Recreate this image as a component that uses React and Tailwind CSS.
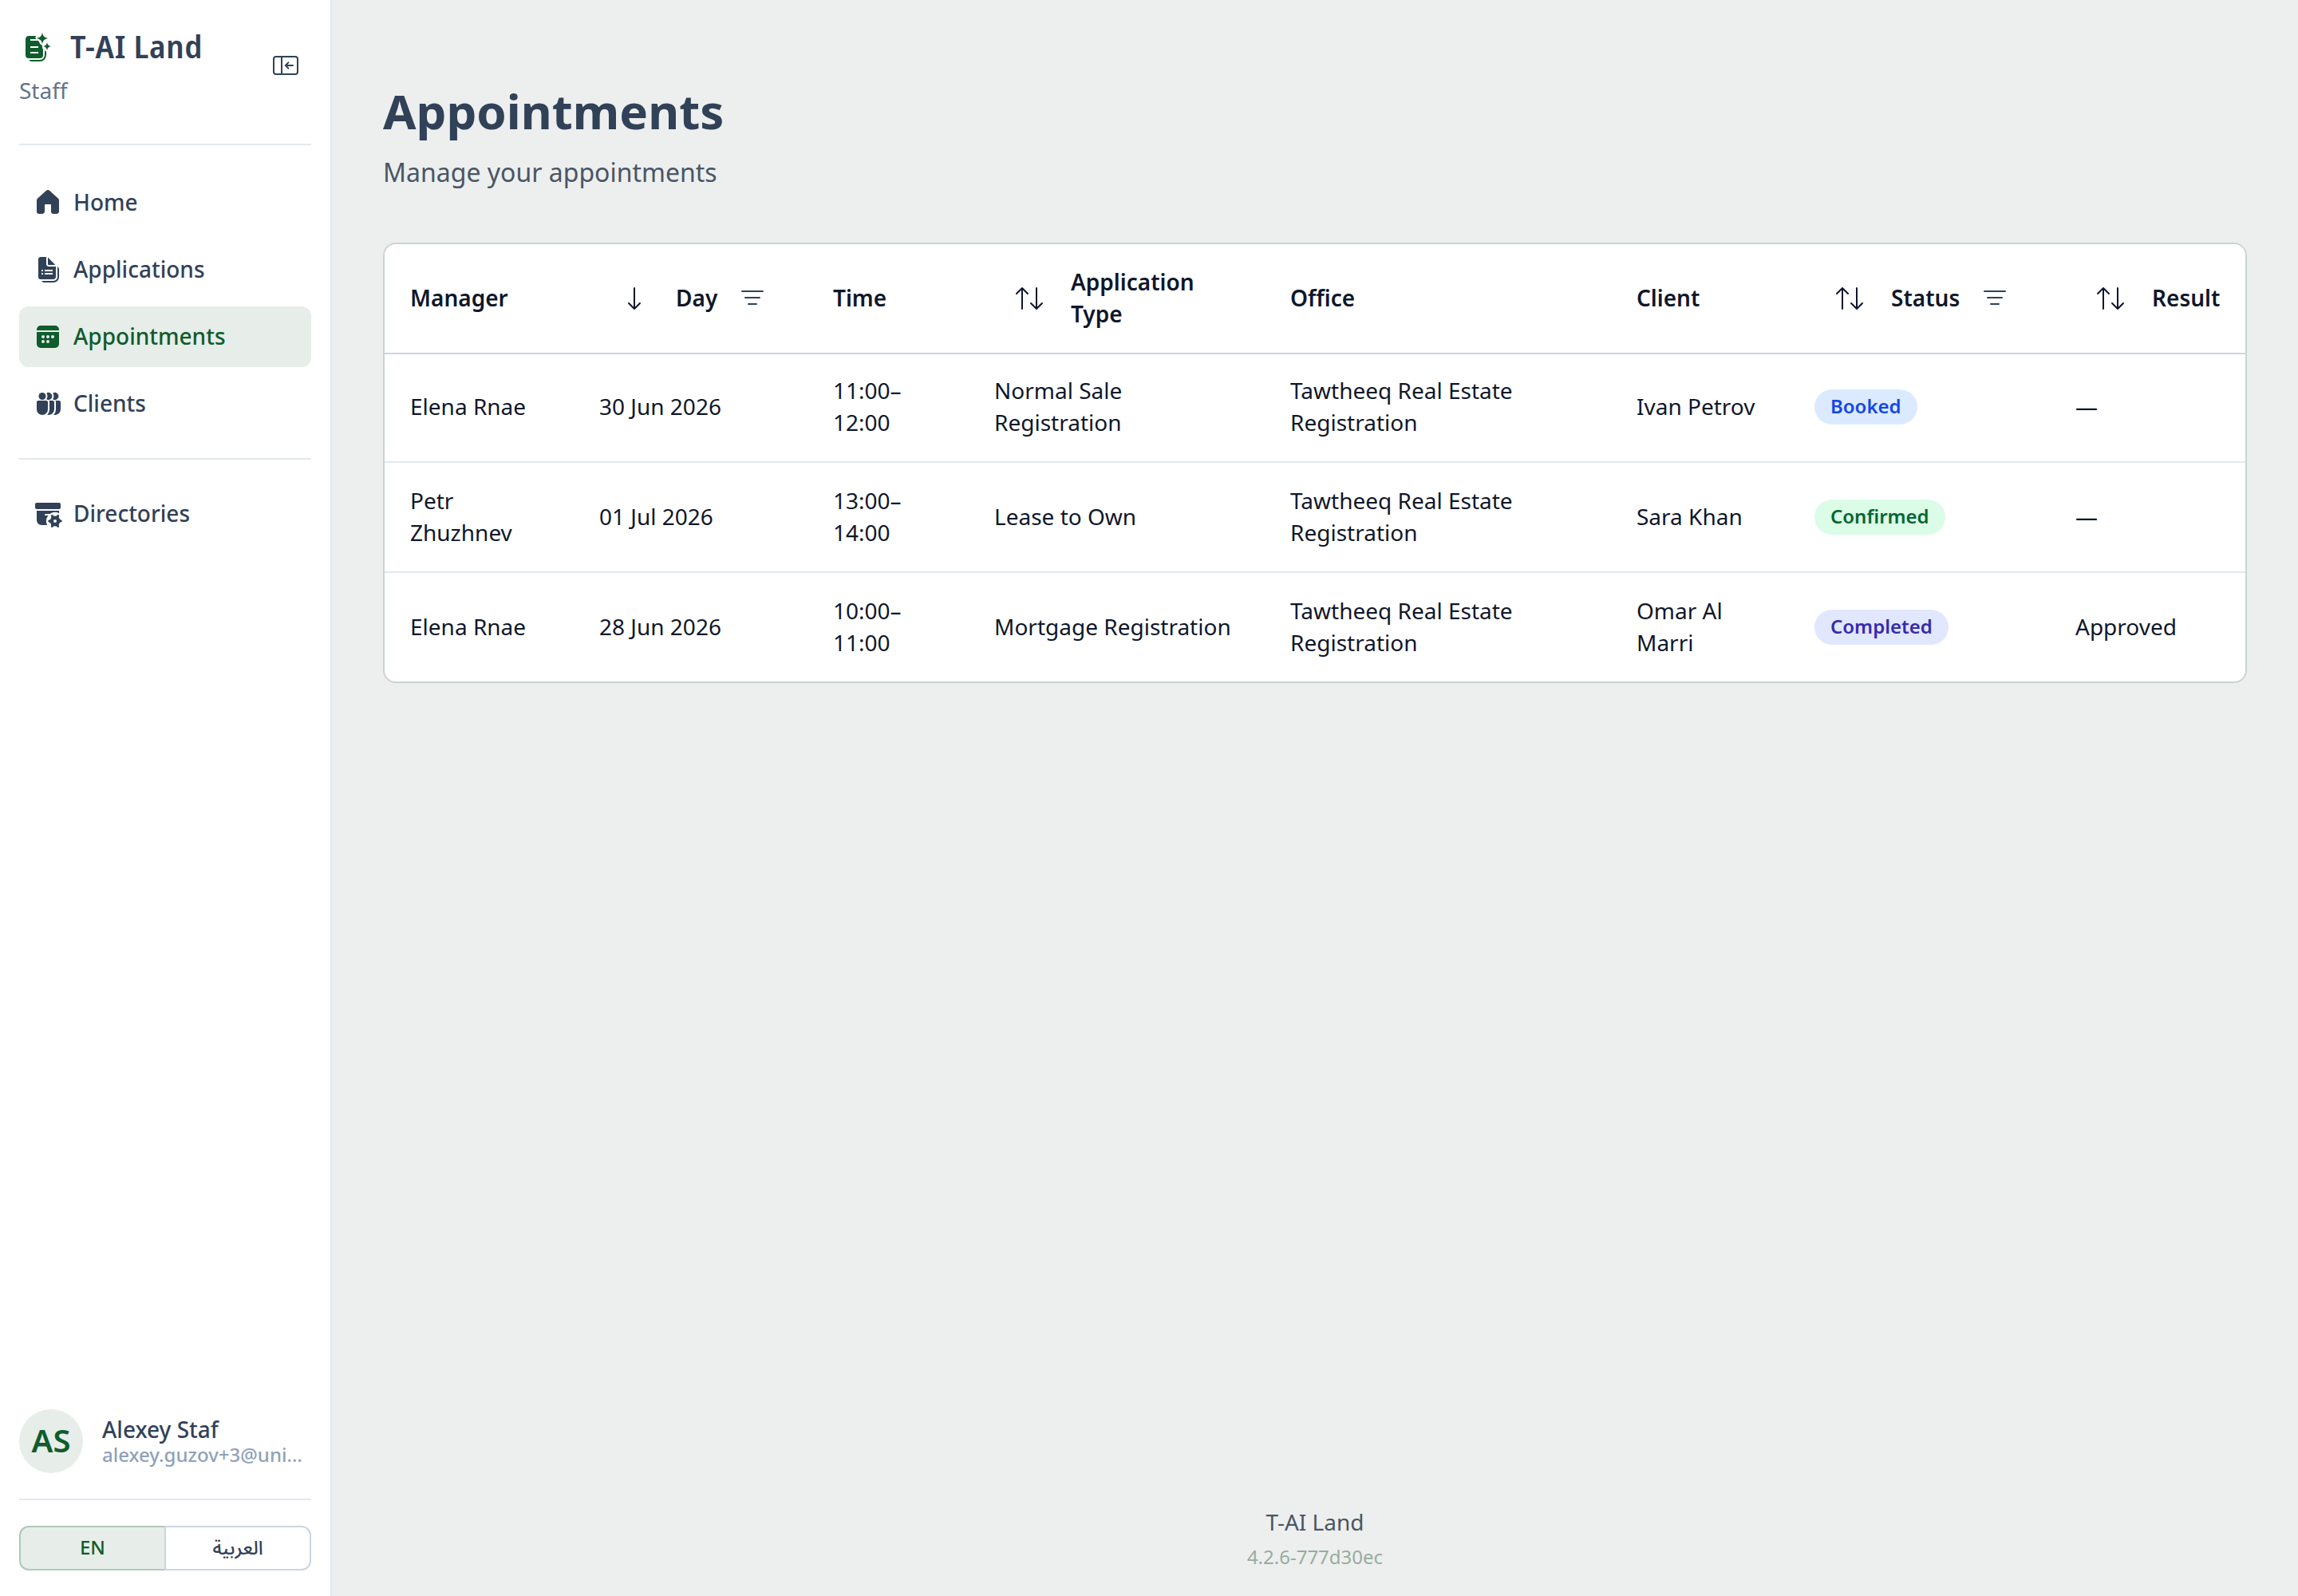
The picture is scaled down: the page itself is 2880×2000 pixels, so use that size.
/* Appointments page: staff sidebar, appointments table and footer. */

const STATUS_STYLES = {
  Booked: "bg-blue-100 text-blue-700",
  Confirmed: "bg-green-100 text-green-800",
  Completed: "bg-indigo-100 text-indigo-800",
};

const COLUMNS = [
  { label: "Manager", width: "w-[237px]" },
  { label: "Day", width: "w-[293px]", sort: "desc", filter: true },
  { label: "Time", width: "w-[202px]" },
  { label: "Application Type", width: "w-[371px]", sort: "none" },
  { label: "Office", width: "w-[434px]" },
  { label: "Client", width: "w-[223px]" },
  { label: "Status", width: "w-[327px]", sort: "none", filter: true },
  { label: "Result", width: "w-[245px]", sort: "none" },
];

const ROWS = [
  {
    height: "h-[136px] pb-0.5",
    manager: "Elena Rnae",
    day: "30 Jun 2026",
    time: ["11:00–", "12:00"],
    type: "Normal Sale Registration",
    typeWidth: "w-[240px]",
    office: "Tawtheeq Real Estate Registration",
    client: "Ivan Petrov",
    status: "Booked",
    result: "—",
  },
  {
    height: "h-[138px]",
    manager: "Petr Zhuzhnev",
    day: "01 Jul 2026",
    time: ["13:00–", "14:00"],
    type: "Lease to Own",
    office: "Tawtheeq Real Estate Registration",
    client: "Sara Khan",
    status: "Confirmed",
    result: "—",
  },
  {
    height: "h-[136px]",
    manager: "Elena Rnae",
    day: "28 Jun 2026",
    time: ["10:00–", "11:00"],
    type: "Mortgage Registration",
    office: "Tawtheeq Real Estate Registration",
    client: "Omar Al Marri",
    status: "Completed",
    result: "Approved",
  },
];

function Icon({ children }) {
  return (
    <svg viewBox="0 0 20 20" className="size-10 shrink-0" fill="currentColor">
      {children}
    </svg>
  );
}

function LogoIcon() {
  return (
    <Icon>
      <path d="M6 3h4.6a1.2 1.2 0 0 0 .3 2H7v1h5.1l.9 1.8c.3.6.8 1 1.4 1l.1 1.8.5.8V15a2 2 0 0 1-2 2H6a2 2 0 0 1-2-2V5c0-1.1.9-2 2-2Zm1 6.5v1h5v-1H7ZM7 13v1h5v-1H7Z" />
      <path d="M16 12.2l1 .6V15a4 4 0 0 1-4 4H7.7a2 2 0 0 1-1.6-1H13a3 3 0 0 0 3-3v-2.8Z" />
      <path d="M14.5 1c.5 2.2 1.3 3 3.5 3.5-2.2.5-3 1.3-3.5 3.5-.5-2.2-1.3-3-3.5-3.5C13.2 4 14 3.2 14.5 1Z" />
      <path d="M17.5 7.1c.4 1.5.9 2 2.4 2.4-1.5.4-2 .9-2.4 2.4-.4-1.5-.9-2-2.4-2.4 1.5-.4 2-.9 2.4-2.4Z" />
    </Icon>
  );
}

function CollapseIcon() {
  return (
    <Icon>
      <g fill="none" stroke="currentColor" strokeLinecap="round" strokeLinejoin="round">
        <rect x="2.5" y="4.5" width="15" height="11" rx="1.5" />
        <path d="M7.5 4.5v11" />
        <path d="M14.5 10H9.9M11.7 8.2 9.9 10l1.8 1.8" />
      </g>
    </Icon>
  );
}

function HomeIcon() {
  return (
    <Icon>
      <path d="M9 2.39a1.5 1.5 0 0 1 2 0l5.5 4.94c.32.28.5.69.5 1.12v7.05c0 .83-.67 1.5-1.5 1.5H13.5a1.5 1.5 0 0 1-1.5-1.5V11.5a.5.5 0 0 0-.5-.5h-3a.5.5 0 0 0-.5.5v4c0 .83-.67 1.5-1.5 1.5h-2A1.5 1.5 0 0 1 3 15.5V8.45c0-.43.18-.84.5-1.12L9 2.39Z" />
    </Icon>
  );
}

function ApplicationsIcon() {
  return (
    <Icon>
      <path
        fillRule="evenodd"
        d="M9 2v4.5C9 7.33 9.67 8 10.5 8H15v6.5c0 .83-.67 1.5-1.5 1.5h-8A1.5 1.5 0 0 1 4 14.5v-11C4 2.67 4.67 2 5.5 2H9ZM6 10v1h1v-1H6Zm2 0v1h5v-1H8Zm-2 2v1h1v-1H6Zm2 0v1h5v-1H8Z"
      />
      <path d="M10 2.3v4.2c0 .28.22.5.5.5h4.2L10 2.3Z" />
      <path d="M6 17c.37.6 1 1 1.75 1h5.75a3.5 3.5 0 0 0 3.5-3.5V9.73A2 2 0 0 0 16 8v6.5a2.5 2.5 0 0 1-2.5 2.5H6Z" />
    </Icon>
  );
}

function CalendarIcon() {
  return (
    <Icon>
      <path d="M14.5 3A2.5 2.5 0 0 1 17 5.5V6H3v-.5A2.5 2.5 0 0 1 5.5 3h9Z" />
      <path
        fillRule="evenodd"
        d="M17 7v7.5a2.5 2.5 0 0 1-2.5 2.5h-9A2.5 2.5 0 0 1 3 14.5V7h14ZM7 11a1 1 0 1 0 0-2 1 1 0 0 0 0 2Zm0 3a1 1 0 1 0 0-2 1 1 0 0 0 0 2Zm3-3a1 1 0 1 0 0-2 1 1 0 0 0 0 2Zm0 3a1 1 0 1 0 0-2 1 1 0 0 0 0 2Zm3-3a1 1 0 1 0 0-2 1 1 0 0 0 0 2Z"
      />
    </Icon>
  );
}

function ClientsIcon() {
  return (
    <Icon>
      <circle cx="6.5" cy="5.25" r="2.25" />
      <path d="M4 8h5a1 1 0 0 1 1 1v4.5a3.5 3.5 0 1 1-7 0V9a1 1 0 0 1 1-1Z" />
      <path d="M9.1 7.1a3.24 3.24 0 0 0 0-3.7 2.25 2.25 0 1 1 0 3.7Z" />
      <path d="M10.73 8H13a1 1 0 0 1 1 1v4.5a3.5 3.5 0 0 1-4.4 3.38A4.48 4.48 0 0 0 11 13.5V9c0-.36-.1-.7-.27-1Z" />
      <path d="M13.1 7.1a3.24 3.24 0 0 0 0-3.7 2.25 2.25 0 1 1 0 3.7Z" />
      <path d="M14.73 8H17a1 1 0 0 1 1 1v4.5a3.5 3.5 0 0 1-4.4 3.38A4.48 4.48 0 0 0 15 13.5V9c0-.36-.1-.7-.27-1Z" />
    </Icon>
  );
}

function DirectoriesIcon() {
  return (
    <Icon>
      <path d="M3 3a1 1 0 0 0-1 1v2a1 1 0 0 0 1 1h14a1 1 0 0 0 1-1V4a1 1 0 0 0-1-1H3Z" />
      <path d="M3 8h14v1.6a5.5 5.5 0 0 0-5.73.4H8.5a.5.5 0 0 0 0 1h1.76A5.5 5.5 0 0 0 9.6 17H6a3 3 0 0 1-3-3V8Z" />
      <path
        fillRule="evenodd"
        d="M12.07 11.44a2 2 0 0 1-1.43 2.48l-.46.12a4.73 4.73 0 0 0 .01 1.01l.35.08a2 2 0 0 1 1.45 2.52l-.13.42c.26.2.53.38.83.52l.32-.34a2 2 0 0 1 2.91 0l.33.34c.3-.14.57-.31.83-.51l-.16-.55a2 2 0 0 1 1.43-2.48l.47-.12a4.73 4.73 0 0 0-.02-1.01l-.35-.08a2 2 0 0 1-1.45-2.51l.13-.42a4.3 4.3 0 0 0-.83-.53l-.32.34a2 2 0 0 1-2.91 0l-.33-.34c-.3.14-.57.31-.83.5l.16.56ZM14.5 15.5a1 1 0 1 1 0-2 1 1 0 0 1 0 2Z"
      />
    </Icon>
  );
}

function SortIcon({ direction }) {
  return (
    <Icon>
      <g fill="none" stroke="currentColor" strokeLinecap="round" strokeLinejoin="round">
        {direction === "desc" ? (
          <path d="M10 3.5v13M6.5 13l3.5 3.5 3.5-3.5" />
        ) : (
          <path d="M5.5 16.5v-13M2 7l3.5-3.5L9 7M14.5 3.5v13M11 13l3.5 3.5L18 13" />
        )}
      </g>
    </Icon>
  );
}

function FilterIcon() {
  return (
    <Icon>
      <path
        d="M3.5 5.5h13M5.5 9.5h9M7.5 13.5h5"
        fill="none"
        stroke="currentColor"
        strokeLinecap="round"
      />
    </Icon>
  );
}

function NavItem({ icon, label, active }) {
  return (
    <a
      className={`flex h-[76px] items-center gap-3 rounded-xl pl-4 text-[28px] font-medium ${
        active ? "bg-[#e7ede9] text-[#0f5c2c]" : "text-slate-700"
      }`}
    >
      {icon}
      <span className="pb-0.5">{label}</span>
    </a>
  );
}

function Sidebar() {
  return (
    <aside className="flex w-[416px] shrink-0 flex-col border-r-2 border-slate-200 bg-white px-6">
      <header className="flex h-[182px] justify-between border-b-2 border-slate-200 pt-8">
        <div>
          <div className="flex h-[54px] items-center gap-6">
            <span className="text-[#0f5c2c]">
              <LogoIcon />
            </span>
            <span className="pb-0.5 font-['Noto_Sans_Display','Noto_Sans',sans-serif] text-[40px] leading-[54px] font-semibold tracking-[0.7px] text-slate-700 [font-stretch:87.5%]">
              T-AI Land
            </span>
          </div>
          <div className="mt-[7px] text-[28px] leading-10 text-slate-500">Staff</div>
        </div>
        <button className="mt-[30px] mr-3 h-10 text-slate-700">
          <CollapseIcon />
        </button>
      </header>

      <nav className="flex flex-col gap-2 pt-[34px]">
        <NavItem icon={<HomeIcon />} label="Home" />
        <NavItem icon={<ApplicationsIcon />} label="Applications" />
        <NavItem icon={<CalendarIcon />} label="Appointments" active />
        <NavItem icon={<ClientsIcon />} label="Clients" />
      </nav>
      <div className="mt-[30px] border-t-2 border-slate-200 pt-[30px]">
        <NavItem icon={<DirectoriesIcon />} label="Directories" />
      </div>

      <div className="mt-auto flex items-center gap-6 pb-8">
        <div className="flex size-20 shrink-0 items-center justify-center rounded-full bg-[#e7ede9] pb-0.5 text-[40px] font-semibold text-[#0f5c2c]">
          AS
        </div>
        <div className="min-w-0">
          <div className="text-[28px] leading-[35px] font-medium text-slate-700">Alexey Staf</div>
          <div className="-mt-px mb-px text-2xl leading-[30px] font-medium whitespace-nowrap text-slate-400">
            alexey.guzov+3@uni…
          </div>
        </div>
      </div>
      <div className="border-t-2 border-slate-200 pt-8 pb-8">
        <div className="flex h-14 font-['Noto_Sans','Noto_Sans_Arabic_UI',sans-serif] text-2xl font-medium">
          <button className="flex w-[182px] items-center justify-center rounded-l-xl border-2 border-r-0 border-[#b0c9b9] bg-[#e7ede9] pb-0.5 text-[#0f5c2c]">
            EN
          </button>
          <button className="flex flex-1 items-center justify-center rounded-r-xl border-2 border-slate-300 pb-0.5 text-slate-700">
            العربية
          </button>
        </div>
      </div>
    </aside>
  );
}

function HeaderCell({ column }) {
  const { label, width, sort, filter } = column;
  return (
    <th className={`${width} h-[138px] border-b-2 border-slate-300 px-8 text-left font-semibold`}>
      <div className={`flex items-center ${sort ? "pl-6" : ""}`}>
        {sort && (
          <span className="mr-8">
            <SortIcon direction={sort} />
          </span>
        )}
        <span className="pb-0.5">{label}</span>
        {filter && (
          <span className="ml-6 text-slate-700">
            <FilterIcon />
          </span>
        )}
      </div>
    </th>
  );
}

function StatusBadge({ status }) {
  return (
    <div
      className={`flex h-11 w-fit items-center rounded-full px-5 pb-0.5 text-2xl font-semibold ${STATUS_STYLES[status]}`}
    >
      {status}
    </div>
  );
}

function AppointmentRow({ row, last }) {
  const cell = `${row.height} px-8 ${last ? "" : "border-b-2 border-slate-200"}`;
  return (
    <tr>
      <td className={cell}>
        <div className="pb-0.5">{row.manager}</div>
      </td>
      <td className={cell}>
        <div className="pb-0.5">{row.day}</div>
      </td>
      <td className={cell}>
        <div className="pb-0.5">
          {row.time[0]}
          <br />
          {row.time[1]}
        </div>
      </td>
      <td className={cell}>
        <div className={`pb-0.5 ${row.typeWidth ?? ""}`}>{row.type}</div>
      </td>
      <td className={cell}>
        <div className="pb-0.5">{row.office}</div>
      </td>
      <td className={cell}>
        <div className="pb-0.5">{row.client}</div>
      </td>
      <td className={cell}>
        <StatusBadge status={row.status} />
      </td>
      <td className={cell}>
        <div className="pb-0.5">{row.result}</div>
      </td>
    </tr>
  );
}

function AppointmentsTable() {
  return (
    <div className="overflow-hidden rounded-2xl border-2 border-[#cbd5cf] bg-white">
      <table className="w-full table-fixed border-separate border-spacing-0 text-[28px] leading-10 text-slate-900">
        <thead>
          <tr>
            {COLUMNS.map((column) => (
              <HeaderCell key={column.label} column={column} />
            ))}
          </tr>
        </thead>
        <tbody>
          {ROWS.map((row, i) => (
            <AppointmentRow key={row.day} row={row} last={i === ROWS.length - 1} />
          ))}
        </tbody>
      </table>
    </div>
  );
}

export default function App() {
  return (
    <div className="flex h-[2000px] w-[2880px] bg-[#ecefee] font-['Noto_Sans',sans-serif]">
      <Sidebar />
      <main className="flex flex-1 flex-col px-16 pt-[103px]">
        <h1 className="text-6xl leading-[72px] font-bold text-slate-700">Appointments</h1>
        <p className="mt-[17px] mb-16 text-[32px] leading-12 text-gray-600">
          Manage your appointments
        </p>
        <AppointmentsTable />
        <footer className="mt-auto pb-[33px] text-center">
          <div className="text-[28px] leading-10 text-gray-600">T-AI Land</div>
          <div className="mt-2 text-2xl leading-8 text-[#9aaba0]">4.2.6-777d30ec</div>
        </footer>
      </main>
    </div>
  );
}
